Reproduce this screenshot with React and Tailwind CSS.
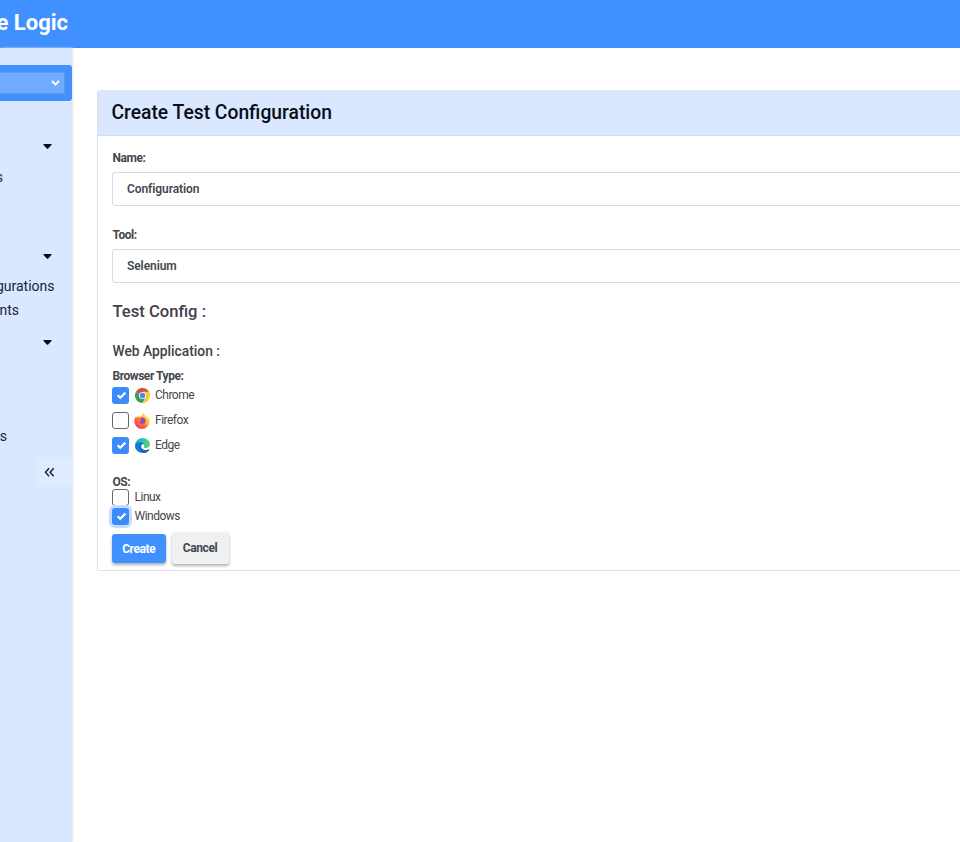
import React from "react";

function Caret({ className }) {
  return (
    <svg className={`ml-[43px] block h-[5px] w-[9px] ${className}`} viewBox="0 0 9 5">
      <path d="M.8 0h7.4q.7.3.2.9L5.2 4.5q-.7.6-1.4 0L.6.9Q.1.3.8 0z" fill="#050a14" />
    </svg>
  );
}

function NavItem({ children, className }) {
  return (
    <div className={`flex h-6 justify-end whitespace-nowrap text-[14px] leading-6 text-[#17233b] ${className}`}>
      {children}
    </div>
  );
}

function Check({ on, focus }) {
  const state = on ? "bg-[#3b8bfb]" : "border border-[#666a70] bg-white";
  return (
    <span
      className={`flex size-[17px] shrink-0 items-center justify-center rounded-[3px] ${state} ${focus ? "ring-3 ring-[#c4dcff]" : ""}`}
    >
      {on && (
        <svg className="ml-px size-[11px]" viewBox="0 0 11 11" fill="none">
          <path d="M1.6 5.2 4.2 7.7 9.4 2.6" stroke="#fff" strokeWidth="2.2" />
        </svg>
      )}
    </span>
  );
}

function ChromeLogo() {
  return (
    <svg className="size-[15px]" viewBox="0 0 48 48">
      <path d="M24 24 3.2 12A24 24 0 0 1 44.8 12z" fill="#dc4a3c" />
      <path d="M24 24 3.2 12A24 24 0 0 0 24 48l10.4-18z" fill="#33a057" />
      <path d="M24 12h20.8A24 24 0 0 1 24 48l10.4-18z" fill="#f7c93a" />
      <circle cx="24" cy="24" r="11.5" fill="#f2f4f4" />
      <circle cx="24" cy="24" r="8.5" fill="#4a8ae8" />
    </svg>
  );
}

function FirefoxLogo() {
  return (
    <svg className="size-4" viewBox="0 0 48 48">
      <defs>
        <linearGradient id="ffx" x1=".85" y1=".1" x2=".2" y2=".9">
          <stop offset="0" stopColor="#fff44f" />
          <stop offset=".4" stopColor="#ffb435" />
          <stop offset=".7" stopColor="#ff5a42" />
          <stop offset="1" stopColor="#f0357b" />
        </linearGradient>
      </defs>
      <path
        d="M45 16c-1-3-4-6-6-7 2 3 3 6 3 8C38 9 31 7 29 0c-4 2-6 7-6 10-3 0-6 1-8 3-1-1-1-3-1-5-3 1-5 4-6 6-1-1-1-4-1-5C3 14 1 19 1 25a23 23 0 0 0 46 0c0-3-1-6-2-9z"
        fill="url(#ffx)"
      />
      <circle cx="25" cy="23" r="9.5" fill="#9149c0" />
      <path d="M8 17c4-2 8-1 10 1l7 1c0 2-5 4-6 5-1 3 0 5-3 5 2 6 12 7 17 1-2 9-14 12-21 4-3-4-5-10-4-17z" fill="#ff6a38" />
    </svg>
  );
}

function EdgeLogo() {
  return (
    <svg className="size-[15px]" viewBox="0 0 48 48">
      <defs>
        <linearGradient id="edgeTop" x1="0" y1=".4" x2="1" y2=".5">
          <stop offset="0" stopColor="#24a5de" />
          <stop offset=".55" stopColor="#2dc3bd" />
          <stop offset="1" stopColor="#65d94e" />
        </linearGradient>
      </defs>
      <path d="M0 23c2-8 8-12 16-12 8 0 13 4 13 10-5-2-9 1-9 6 0 9 8 15 23 10 2-1 3 0 2 2-5 6-12 9-19 9C10 48-1 37 0 23z" fill="#137bcb" />
      <path d="M17 25c-3 10 3 21 13 22 6-1 12-4 15-8 1-2 0-3-2-2-12 5-24 1-26-12z" fill="#1b62ad" />
      <path d="M0 23C1 10 11 0 24 0c14 0 24 10 24 20 0 8-6 12-13 12-6 0-8-2-7-4 5-8-2-16-12-16-7 0-14 5-16 11z" fill="url(#edgeTop)" />
    </svg>
  );
}

function Option({ label, on, focus, logo, className }) {
  return (
    <div className={`flex items-center text-[12px] tracking-[-0.3px] text-[#45484d] ${className}`}>
      <Check on={on} focus={focus} />
      {logo && <span className="ml-[5px] flex w-4 justify-center">{logo}</span>}
      <span className={`pb-px tracking-[-0.5px] ${logo ? "ml-[5px]" : "ml-[5.5px]"}`}>{label}</span>
    </div>
  );
}

function Label({ children, className }) {
  return (
    <div className={`h-[15px] pl-[0.5px] text-[12px] font-bold leading-[16px] tracking-[-0.45px] text-[#43464b] ${className}`}>
      {children}
    </div>
  );
}

function Field({ label, value, className }) {
  return (
    <div className={className}>
      <Label>{label}</Label>
      <div className="-mr-1 mt-[7px] flex h-[34px] items-center rounded-[3px] border border-[#d7dade] pl-[14px] text-[12px] font-semibold tracking-[-0.08px] text-[#42484f]">
        {value}
      </div>
    </div>
  );
}

export default function App() {
  return (
    <div className="flex h-[842px] w-[960px] flex-col overflow-hidden bg-white font-['Roboto','Liberation_Sans',sans-serif]">
      <header className="flex h-12 shrink-0 items-center bg-[#4090ff]">
        <div className="flex w-[68px] justify-end whitespace-nowrap pb-[2px] text-[22px] font-bold leading-7 text-white">
          e Logic
        </div>
      </header>
      <div className="flex min-h-0 flex-1">
        <aside className="w-[72px] shrink-0 bg-[#d9e8ff] pt-[17px] shadow-[1px_0_2px_#e3e4e8]">
          <div className="flex h-[36px] w-[72px] items-center rounded-r-[3px] bg-[#4090ff]">
            <div className="flex h-[22px] w-[65px] items-center justify-end border border-l-0 border-[#6698dc] bg-[#70abff] pr-1">
              <svg className="h-[6px] w-[9px]" viewBox="0 0 9 6" fill="none">
                <path d="m1 1 3.5 3.5L8 1" stroke="#fff" strokeWidth="2" />
              </svg>
            </div>
          </div>
          <Caret className="mt-[43px]" />
          <NavItem className="mt-4 pr-[69px]">s</NavItem>
          <Caret className="mt-[65px]" />
          <NavItem className="mt-[15px] pr-[17.5px]">gurations</NavItem>
          <NavItem className="pr-[53px]">nts</NavItem>
          <Caret className="mt-[18px]" />
          <NavItem className="mt-[79px] pr-[65px]">s</NavItem>
          <div className="ml-[37px] mt-[11px] flex h-[26px] items-center rounded-l bg-[#dfebff] pl-[7px]">
            <svg className="h-[11px] w-[11px]" viewBox="0 0 11 11" fill="none">
              <path d="M5.1 1.2 1.5 5.2l3.6 4M9.7 1.2 6.1 5.2l3.6 4" stroke="#17233b" strokeWidth="1.5" />
            </svg>
          </div>
        </aside>
        <main className="min-w-0 flex-1 pl-[25px] pt-[42px]">
          <section className="h-[481px] rounded-tl-[3px] border-b border-l border-[#dddfe2]">
            <h1 className="flex h-[46px] items-center rounded-tl-[3px] border-b border-[#c9dcf6] bg-[#d9e8ff] pl-[13.5px] pt-[2px] text-[19.3px] font-medium text-[#080d18]">
              Create Test Configuration
            </h1>
            <div className="pl-[14px] pt-[14px]">
              <Field label="Name:" value="Configuration" />
              <Field className="mt-[21px]" label="Tool:" value="Selenium" />
              <h2 className="mt-[17px] h-6 pl-[0.5px] text-[16.6px] font-medium leading-6 text-[#3f4247]">Test Config :</h2>
              <h3 className="mt-[17px] h-5 pl-[0.5px] text-[13.8px] font-medium leading-5 text-[#3f4247]">Web Application :</h3>
              <Label className="mt-[7px]">Browser Type:</Label>
              <Option className="mt-[4px] h-[17px]" on label="Chrome" logo={<ChromeLogo />} />
              <Option className="mt-[8px] h-[17px]" label="Firefox" logo={<FirefoxLogo />} />
              <Option className="mt-[8px] h-[17px]" on label="Edge" logo={<EdgeLogo />} />
              <Label className="mt-[20px]">OS:</Label>
              <Option className="h-[17px]" label="Linux" />
              <Option className="mt-[2px] h-[17px]" on focus label="Windows" />
              <div className="mt-[7px] flex gap-[6px] text-[12px] font-bold tracking-[-0.4px]">
                <button className="mt-[2px] h-[29px] w-[53.5px] rounded-[3px] bg-[#4090ff] text-white shadow-[0_2px_3px_#aeb2b8]">
                  Create
                </button>
                <button className="h-[32px] w-[57px] rounded-[3px] bg-[#eef0f2] text-[#42484f] shadow-[0_2px_3px_#aeb2b8]">
                  Cancel
                </button>
              </div>
            </div>
          </section>
        </main>
      </div>
    </div>
  );
}
